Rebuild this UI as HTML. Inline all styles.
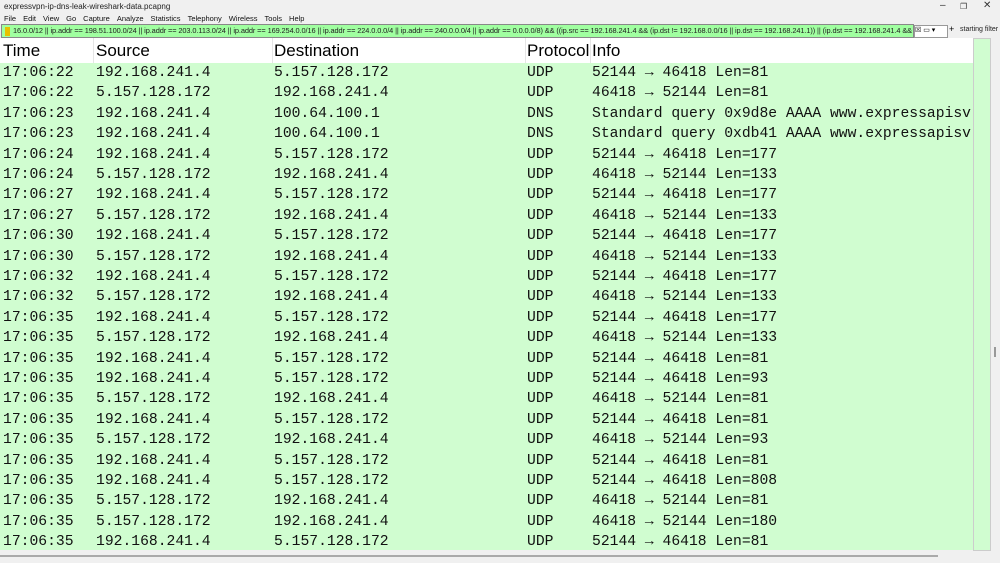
<!DOCTYPE html><html><head><style>
body{margin:0;width:1000px;height:563px;overflow:hidden;background:#f0f0f0;font-family:"Liberation Sans",sans-serif;position:relative}
.t{position:absolute;left:4px;top:2px;font-size:8px;color:#222}
.wc{position:absolute;top:0;font-size:10px;color:#333}
.menu{position:absolute;top:14px;left:4px;font-size:7.5px;color:#111;word-spacing:0}
.menu span{margin-right:7px}
.filt{position:absolute;left:1px;top:24px;width:911px;height:12px;background:#a0ffa0;border:1px solid #888;font-size:7.4px;line-height:12px;white-space:nowrap;overflow:hidden;color:#222;letter-spacing:-0.1px}
.sf{position:absolute;left:960px;top:26px;font-size:7px;color:#222}
.tbl{position:absolute;left:0;top:38px;width:973px;height:512px;background:#d0fdd0;overflow:hidden}
.hd{position:absolute;left:0;top:0;width:973px;height:25px;background:#fff;font-size:17px;line-height:25px}
.hd span,.r span{position:absolute;top:0}
.r{position:absolute;left:0;height:20.4px;font-family:"Liberation Mono",monospace;font-size:14.7px;line-height:20.4px;color:#111;white-space:nowrap;width:973px}
.vs{position:absolute;left:973px;top:38px;width:16px;height:511px;background:#d0fdd0;border:1px solid #ccc}
.hs{position:absolute;left:0;top:555px;width:938px;height:2px;background:#aaa}
</style></head><body>
<div class="t">expressvpn-ip-dns-leak-wireshark-data.pcapng</div>
<div class="wc" style="left:940px">–</div><div class="wc" style="left:960px;font-size:8px;top:2px">❐</div><div class="wc" style="left:983px">✕</div>
<div class="menu"><span>File</span><span>Edit</span><span>View</span><span>Go</span><span>Capture</span><span>Analyze</span><span>Statistics</span><span>Telephony</span><span>Wireless</span><span>Tools</span><span>Help</span></div>
<div class="filt"><span style="display:inline-block;width:5px;height:9px;background:#e8c000;margin:0 3px;vertical-align:middle"></span>16.0.0/12 || ip.addr == 198.51.100.0/24 || ip.addr == 203.0.113.0/24 || ip.addr == 169.254.0.0/16 || ip.addr == 224.0.0.0/4 || ip.addr == 240.0.0.0/4 || ip.addr == 0.0.0.0/8) &amp;&amp; ((ip.src == 192.168.241.4 &amp;&amp; (ip.dst != 192.168.0.0/16 || ip.dst == 192.168.241.1)) || (ip.dst == 192.168.241.4 &amp;&amp; (ip.src != 192.168.0.0/16 || ip.src == 192.168.241.1)))</div>
<div style="position:absolute;left:914px;top:25px;width:32px;height:11px;background:#fff;border:1px solid #999;font-size:7px">☒ ▭ ▾</div>
<div style="position:absolute;left:949px;top:24px;font-size:9px">+</div>
<div class="sf">starting filter</div>
<div class="tbl">
<div class="hd"><span style="left:3px">Time</span><span style="left:96px">Source</span><span style="left:274px">Destination</span><span style="left:527px">Protocol</span><span style="left:592px">Info</span>
<div style="position:absolute;left:93px;top:0;width:1px;height:25px;background:#e5e5e5"></div><div style="position:absolute;left:272px;top:0;width:1px;height:25px;background:#e5e5e5"></div><div style="position:absolute;left:525px;top:0;width:1px;height:25px;background:#e5e5e5"></div><div style="position:absolute;left:590px;top:0;width:1px;height:25px;background:#e5e5e5"></div></div>
<div id="rows"></div>
</div>
<div class="vs"></div>
<div style="position:absolute;left:994px;top:347px;width:2px;height:10px;background:#999"></div>
<div class="hs"></div>
<script>
var d=[["17:06:22","192.168.241.4","5.157.128.172","UDP","52144 → 46418 Len=81"],
["17:06:22","5.157.128.172","192.168.241.4","UDP","46418 → 52144 Len=81"],
["17:06:23","192.168.241.4","100.64.100.1","DNS","Standard query 0x9d8e AAAA www.expressapisv"],
["17:06:23","192.168.241.4","100.64.100.1","DNS","Standard query 0xdb41 AAAA www.expressapisv"],
["17:06:24","192.168.241.4","5.157.128.172","UDP","52144 → 46418 Len=177"],
["17:06:24","5.157.128.172","192.168.241.4","UDP","46418 → 52144 Len=133"],
["17:06:27","192.168.241.4","5.157.128.172","UDP","52144 → 46418 Len=177"],
["17:06:27","5.157.128.172","192.168.241.4","UDP","46418 → 52144 Len=133"],
["17:06:30","192.168.241.4","5.157.128.172","UDP","52144 → 46418 Len=177"],
["17:06:30","5.157.128.172","192.168.241.4","UDP","46418 → 52144 Len=133"],
["17:06:32","192.168.241.4","5.157.128.172","UDP","52144 → 46418 Len=177"],
["17:06:32","5.157.128.172","192.168.241.4","UDP","46418 → 52144 Len=133"],
["17:06:35","192.168.241.4","5.157.128.172","UDP","52144 → 46418 Len=177"],
["17:06:35","5.157.128.172","192.168.241.4","UDP","46418 → 52144 Len=133"],
["17:06:35","192.168.241.4","5.157.128.172","UDP","52144 → 46418 Len=81"],
["17:06:35","192.168.241.4","5.157.128.172","UDP","52144 → 46418 Len=93"],
["17:06:35","5.157.128.172","192.168.241.4","UDP","46418 → 52144 Len=81"],
["17:06:35","192.168.241.4","5.157.128.172","UDP","52144 → 46418 Len=81"],
["17:06:35","5.157.128.172","192.168.241.4","UDP","46418 → 52144 Len=93"],
["17:06:35","192.168.241.4","5.157.128.172","UDP","52144 → 46418 Len=81"],
["17:06:35","192.168.241.4","5.157.128.172","UDP","52144 → 46418 Len=808"],
["17:06:35","5.157.128.172","192.168.241.4","UDP","46418 → 52144 Len=81"],
["17:06:35","5.157.128.172","192.168.241.4","UDP","46418 → 52144 Len=180"],
["17:06:35","192.168.241.4","5.157.128.172","UDP","52144 → 46418 Len=81"]];
var x=[3,96,274,527,592],h="";
d.forEach(function(r,i){h+='<div class="r" style="top:'+(25+i*20.4)+'px">';r.forEach(function(c,j){h+='<span style="left:'+x[j]+'px">'+c+'</span>'});h+='</div>'});
document.getElementById("rows").innerHTML=h;
</script>
</body></html>
